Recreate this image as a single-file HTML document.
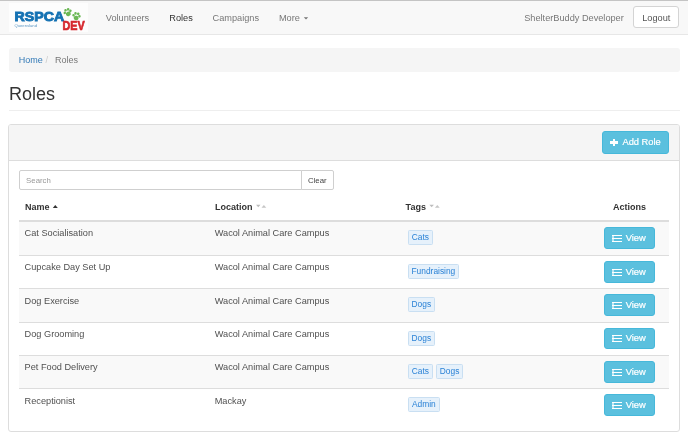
<!DOCTYPE html>
<html><head><meta charset="utf-8">
<style>
*{box-sizing:border-box;margin:0;padding:0}
html,body{-webkit-font-smoothing:antialiased;width:688px;height:443px;overflow:hidden;background:#fff;font-family:"Liberation Sans",sans-serif;color:#333}
.a{position:absolute;white-space:nowrap}
.t{position:absolute;white-space:nowrap;line-height:1}
#topline{left:0;top:0;width:688px;height:1px;background:#c4c4c4}
#nav{left:0;top:1px;width:688px;height:34px;background:#f8f8f8;border-bottom:1px solid #e7e7e7}
#logo{left:9px;top:3.3px;width:78.5px;height:28.3px;background:#fdfdfd}
.nl{font-size:9.2px;color:#777}
.btn-d{background:#fff;border:1px solid #ccc;border-radius:3px}
.crumb{left:9px;top:48px;width:671px;height:24px;background:#f5f5f5;border-radius:3px}
.panel{left:8px;top:124px;width:672px;height:308px;border:1px solid #ddd;border-radius:3px;background:#fff}
.ph{left:9px;top:125px;width:670px;height:36px;background:#f5f5f5;border-bottom:1px solid #ddd;border-radius:2px 2px 0 0}
.btn-i{background:#5bc0de;border:1px solid #46b8da;border-radius:3px}
.th{font-size:9px;font-weight:bold;color:#333}
.td{font-size:9.2px;color:#505050}
.stripe{position:absolute;left:19px;width:650px;background:#f9f9f9}
.hr{position:absolute;left:19px;width:650px;height:1px;background:#ddd}
.tag{position:absolute;height:15px;background:#e6f1fb;border:1px solid #c9dff2;border-radius:1.5px;font-size:8.4px;color:#2a82d6;line-height:13px;text-align:center}
.view{position:absolute;left:604px;width:51px;height:21.6px}
.vt{font-size:9.4px;color:#fff;-webkit-text-stroke:0.2px #fff}
</style></head><body><div id="wrap" style="position:absolute;left:0;top:0;width:688px;height:443px;will-change:transform">
<div class="a" id="topline"></div>
<div class="a" id="nav"></div>
<div class="a" id="logo"></div>
<svg class="a" style="left:0;top:0" width="100" height="36" viewBox="0 0 100 36">
<text x="14.6" y="21.2" font-family="Liberation Sans" font-weight="bold" font-size="13.6" fill="#1572b3" stroke="#1572b3" stroke-width="0.9" textLength="49.6" lengthAdjust="spacingAndGlyphs">RSPCA</text>
<text x="14.4" y="26.9" font-family="Liberation Sans" font-size="3.8" fill="#5b97c4" textLength="22.6" lengthAdjust="spacingAndGlyphs">Queensland</text>
<text x="62.4" y="30.1" font-family="Liberation Sans" font-weight="bold" font-size="12.6" fill="#d6282e" stroke="#d6282e" stroke-width="0.7" textLength="22.2" lengthAdjust="spacingAndGlyphs">DEV</text>
<g fill="#6cb856">
<g transform="translate(67.8,12.4) rotate(-20)">
<ellipse cx="0" cy="1.6" rx="2.5" ry="2.2"/>
<circle cx="-3" cy="-0.6" r="1.3"/><circle cx="-1.4" cy="-2.8" r="1.3"/><circle cx="1.4" cy="-2.8" r="1.3"/><circle cx="3" cy="-0.6" r="1.3"/>
</g>
<g transform="translate(76.4,16.4) rotate(10)">
<ellipse cx="0" cy="1.6" rx="2.5" ry="2.2"/>
<circle cx="-3" cy="-0.6" r="1.3"/><circle cx="-1.4" cy="-2.8" r="1.3"/><circle cx="1.4" cy="-2.8" r="1.3"/><circle cx="3" cy="-0.6" r="1.3"/>
</g>
</g>
</svg>
<!-- nav links -->
<div class="t nl" style="left:105.8px;top:14.2px">Volunteers</div>
<div class="t nl" style="left:169.3px;top:14.2px;color:#333">Roles</div>
<div class="t nl" style="left:212.6px;top:14.2px">Campaigns</div>
<div class="t nl" style="left:278.9px;top:14.2px">More</div>
<div class="t nl" style="left:524.2px;top:14.2px">ShelterBuddy Developer</div>
<div class="a btn-d" style="left:633px;top:6.4px;width:46px;height:22px;border-color:#d4d4d4"></div>
<div class="t nl" style="left:642.2px;top:14.2px;color:#555">Logout</div>

<!-- breadcrumb -->
<div class="a crumb"></div>
<div class="t" style="left:18.7px;top:55.5px;font-size:9px;color:#337ab7">Home</div>
<div class="t" style="left:45.5px;top:55.5px;font-size:9px;color:#ccc">/</div>
<div class="t" style="left:55.1px;top:55.5px;font-size:9px;color:#777">Roles</div>

<!-- page header -->
<div class="t" style="left:9px;top:84.8px;font-size:18px;color:#333">Roles</div>
<div class="a" style="left:9px;top:110px;width:671px;height:1px;background:#eee"></div>

<!-- panel -->
<div class="a panel"></div>
<div class="a ph"></div>
<div class="a btn-i" style="left:602px;top:131px;width:67px;height:22.5px"></div>
<div class="a" style="left:610px;top:141.3px;width:7.8px;height:2.3px;background:#fff"></div>
<div class="a" style="left:612.75px;top:138.5px;width:2.3px;height:7.9px;background:#fff"></div>
<div class="t" style="left:622.5px;top:138.1px;font-size:9.3px;color:#fff;-webkit-text-stroke:0.2px #fff">Add Role</div>

<!-- search -->
<div class="a" style="left:19px;top:170.4px;width:283px;height:19.8px;border:1px solid #cfcfcf;border-radius:2px 0 0 2px"></div>
<div class="t" style="left:26.1px;top:176.9px;font-size:7.8px;color:#999">Search</div>
<div class="a btn-d" style="left:301px;top:170.4px;width:33px;height:19.8px;border-radius:0 2px 2px 0;border-color:#cfcfcf"></div>
<div class="t" style="left:308px;top:176.9px;font-size:7.8px;color:#444">Clear</div>

<!-- table header -->
<div class="t th" style="left:25px;top:202.5px">Name</div>
<div class="t th" style="left:215px;top:202.5px">Location</div>
<div class="t th" style="left:405.6px;top:202.5px">Tags</div>
<div class="t th" style="left:612.9px;top:202.5px">Actions</div>
<div class="a" style="left:19px;top:220px;width:650px;height:2px;background:#ddd"></div>
<svg class="a" style="left:0;top:0" width="688" height="443" viewBox="0 0 688 443">
<polygon points="303.8,17.2 308.2,17.2 306,19.4" fill="#777"/>
<polygon points="52.8,208.1 57.8,208.1 55.3,205.1" fill="#333"/>
<polygon points="256,204.8 260.5,204.8 258.25,207.3" fill="#bdbdbd"/>
<polygon points="261.5,207.8 266.3,207.8 263.9,205.1" fill="#c6c6c6"/>
<polygon points="429.4,204.8 433.9,204.8 431.65,207.3" fill="#bdbdbd"/>
<polygon points="434.9,207.8 439.7,207.8 437.3,205.1" fill="#c6c6c6"/>
</svg>

<!-- rows -->
<!--ROWS-->
<div class="stripe" style="top:222.0px;height:33.0px"></div>
<div class="hr" style="top:255.0px"></div>
<div class="hr" style="top:288.4px"></div>
<div class="stripe" style="top:289.4px;height:32.3px"></div>
<div class="hr" style="top:321.7px"></div>
<div class="hr" style="top:355.1px"></div>
<div class="stripe" style="top:356.1px;height:32.3px"></div>
<div class="hr" style="top:388.4px"></div>
<div class="t td" style="left:24.6px;top:229.14px">Cat Socialisation</div>
<div class="t td" style="left:214.7px;top:229.14px">Wacol Animal Care Campus</div>
<div class="tag" style="left:408.1px;top:230.0px;width:24.5px">Cats</div>
<div class="a view btn-i" style="top:227.0px"></div>
<div class="a" style="left:612.3px;top:235px;width:1.6px;height:7.3px;background:rgba(255,255,255,0.6)"></div>
<div class="a" style="left:612.3px;top:235px;width:1.6px;height:1.3px;background:#fff"></div>
<div class="a" style="left:614.1px;top:235px;width:8.1px;height:1.3px;background:#fff"></div>
<div class="a" style="left:612.3px;top:238px;width:1.6px;height:1.3px;background:#fff"></div>
<div class="a" style="left:614.1px;top:238px;width:8.1px;height:1.3px;background:#fff"></div>
<div class="a" style="left:612.3px;top:241px;width:1.6px;height:1.3px;background:#fff"></div>
<div class="a" style="left:614.1px;top:241px;width:8.1px;height:1.3px;background:#fff"></div>
<div class="t vt" style="left:625.7px;top:232.51px">View</div>
<div class="t td" style="left:24.6px;top:263.14px">Cupcake Day Set Up</div>
<div class="t td" style="left:214.7px;top:263.14px">Wacol Animal Care Campus</div>
<div class="tag" style="left:408.1px;top:264.0px;width:50.6px">Fundraising</div>
<div class="a view btn-i" style="top:261.0px"></div>
<div class="a" style="left:612.3px;top:269px;width:1.6px;height:7.3px;background:rgba(255,255,255,0.6)"></div>
<div class="a" style="left:612.3px;top:269px;width:1.6px;height:1.3px;background:#fff"></div>
<div class="a" style="left:614.1px;top:269px;width:8.1px;height:1.3px;background:#fff"></div>
<div class="a" style="left:612.3px;top:272px;width:1.6px;height:1.3px;background:#fff"></div>
<div class="a" style="left:614.1px;top:272px;width:8.1px;height:1.3px;background:#fff"></div>
<div class="a" style="left:612.3px;top:275px;width:1.6px;height:1.3px;background:#fff"></div>
<div class="a" style="left:614.1px;top:275px;width:8.1px;height:1.3px;background:#fff"></div>
<div class="t vt" style="left:625.7px;top:266.51px">View</div>
<div class="t td" style="left:24.6px;top:296.54px">Dog Exercise</div>
<div class="t td" style="left:214.7px;top:296.54px">Wacol Animal Care Campus</div>
<div class="tag" style="left:408.1px;top:297.4px;width:26.5px">Dogs</div>
<div class="a view btn-i" style="top:294.4px"></div>
<div class="a" style="left:612.3px;top:302px;width:1.6px;height:7.3px;background:rgba(255,255,255,0.6)"></div>
<div class="a" style="left:612.3px;top:302px;width:1.6px;height:1.3px;background:#fff"></div>
<div class="a" style="left:614.1px;top:302px;width:8.1px;height:1.3px;background:#fff"></div>
<div class="a" style="left:612.3px;top:305px;width:1.6px;height:1.3px;background:#fff"></div>
<div class="a" style="left:614.1px;top:305px;width:8.1px;height:1.3px;background:#fff"></div>
<div class="a" style="left:612.3px;top:308px;width:1.6px;height:1.3px;background:#fff"></div>
<div class="a" style="left:614.1px;top:308px;width:8.1px;height:1.3px;background:#fff"></div>
<div class="t vt" style="left:625.7px;top:299.91px">View</div>
<div class="t td" style="left:24.6px;top:329.84px">Dog Grooming</div>
<div class="t td" style="left:214.7px;top:329.84px">Wacol Animal Care Campus</div>
<div class="tag" style="left:408.1px;top:330.7px;width:26.5px">Dogs</div>
<div class="a view btn-i" style="top:327.7px"></div>
<div class="a" style="left:612.3px;top:335px;width:1.6px;height:7.3px;background:rgba(255,255,255,0.6)"></div>
<div class="a" style="left:612.3px;top:335px;width:1.6px;height:1.3px;background:#fff"></div>
<div class="a" style="left:614.1px;top:335px;width:8.1px;height:1.3px;background:#fff"></div>
<div class="a" style="left:612.3px;top:338px;width:1.6px;height:1.3px;background:#fff"></div>
<div class="a" style="left:614.1px;top:338px;width:8.1px;height:1.3px;background:#fff"></div>
<div class="a" style="left:612.3px;top:341px;width:1.6px;height:1.3px;background:#fff"></div>
<div class="a" style="left:614.1px;top:341px;width:8.1px;height:1.3px;background:#fff"></div>
<div class="t vt" style="left:625.7px;top:333.21px">View</div>
<div class="t td" style="left:24.6px;top:363.24px">Pet Food Delivery</div>
<div class="t td" style="left:214.7px;top:363.24px">Wacol Animal Care Campus</div>
<div class="tag" style="left:408.1px;top:364.1px;width:24.5px">Cats</div>
<div class="tag" style="left:436.3px;top:364.1px;width:26.5px">Dogs</div>
<div class="a view btn-i" style="top:361.1px"></div>
<div class="a" style="left:612.3px;top:369px;width:1.6px;height:7.3px;background:rgba(255,255,255,0.6)"></div>
<div class="a" style="left:612.3px;top:369px;width:1.6px;height:1.3px;background:#fff"></div>
<div class="a" style="left:614.1px;top:369px;width:8.1px;height:1.3px;background:#fff"></div>
<div class="a" style="left:612.3px;top:372px;width:1.6px;height:1.3px;background:#fff"></div>
<div class="a" style="left:614.1px;top:372px;width:8.1px;height:1.3px;background:#fff"></div>
<div class="a" style="left:612.3px;top:375px;width:1.6px;height:1.3px;background:#fff"></div>
<div class="a" style="left:614.1px;top:375px;width:8.1px;height:1.3px;background:#fff"></div>
<div class="t vt" style="left:625.7px;top:366.61px">View</div>
<div class="t td" style="left:24.6px;top:396.54px">Receptionist</div>
<div class="t td" style="left:214.7px;top:396.54px">Mackay</div>
<div class="tag" style="left:408.1px;top:397.4px;width:31.5px">Admin</div>
<div class="a view btn-i" style="top:394.4px"></div>
<div class="a" style="left:612.3px;top:402px;width:1.6px;height:7.3px;background:rgba(255,255,255,0.6)"></div>
<div class="a" style="left:612.3px;top:402px;width:1.6px;height:1.3px;background:#fff"></div>
<div class="a" style="left:614.1px;top:402px;width:8.1px;height:1.3px;background:#fff"></div>
<div class="a" style="left:612.3px;top:405px;width:1.6px;height:1.3px;background:#fff"></div>
<div class="a" style="left:614.1px;top:405px;width:8.1px;height:1.3px;background:#fff"></div>
<div class="a" style="left:612.3px;top:408px;width:1.6px;height:1.3px;background:#fff"></div>
<div class="a" style="left:614.1px;top:408px;width:8.1px;height:1.3px;background:#fff"></div>
<div class="t vt" style="left:625.7px;top:399.91px">View</div>
<!--/ROWS-->
</div></body></html>
